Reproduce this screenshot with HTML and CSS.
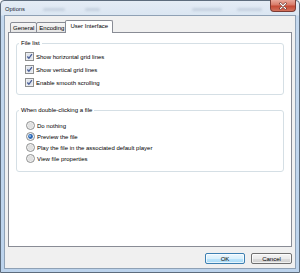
FILE: index.html
```html
<!DOCTYPE html>
<html lang="en">
<head>
  <meta charset="UTF-8">
  <title>Options</title>
  <link rel="stylesheet" href="styles.css">
</head>
<body>
  <div class="window">
    <!-- Title bar -->
    <div class="titlebar">
      <span class="title">Options</span>
      <span class="glass g1"></span>
      <span class="glass g2"></span>
      <span class="glass g3"></span>
      <span class="glass g4"></span>
      <div class="close">
        <svg viewBox="0 0 10 8" width="10" height="8">
          <path d="M2.5 1.5 L7.5 6.5 M7.5 1.5 L2.5 6.5" stroke="#5a2a24" stroke-width="2.4" stroke-linecap="round"/>
          <path d="M2.5 1.5 L7.5 6.5 M7.5 1.5 L2.5 6.5" stroke="#fff" stroke-width="1.2" stroke-linecap="round"/>
        </svg>
      </div>
    </div>

    <div class="client">
      <div class="tabs">
        <div class="tab">General</div>
        <div class="tab">Encoding</div>
        <div class="tab selected">User Interface</div>
      </div>

      <div class="panel">
        <fieldset class="group">
          <legend>File list</legend>
          <div class="rows checks">
            <label class="row">
              <svg class="box" viewBox="0 0 9 9"><rect x=".5" y=".5" width="8" height="8" fill="#f6f6f6" stroke="#8e8f8f"/><rect x="1.5" y="1.5" width="6" height="6" fill="#dfe4ec"/><path d="M2.3 4.5 L3.9 6.3 L6.9 2.2" stroke="#4a5f97" stroke-width="1.3" fill="none"/></svg>
              Show horizontal grid lines
            </label>
            <label class="row">
              <svg class="box" viewBox="0 0 9 9"><rect x=".5" y=".5" width="8" height="8" fill="#f6f6f6" stroke="#8e8f8f"/><rect x="1.5" y="1.5" width="6" height="6" fill="#dfe4ec"/><path d="M2.3 4.5 L3.9 6.3 L6.9 2.2" stroke="#4a5f97" stroke-width="1.3" fill="none"/></svg>
              Show vertical grid lines
            </label>
            <label class="row">
              <svg class="box" viewBox="0 0 9 9"><rect x=".5" y=".5" width="8" height="8" fill="#f6f6f6" stroke="#8e8f8f"/><rect x="1.5" y="1.5" width="6" height="6" fill="#dfe4ec"/><path d="M2.3 4.5 L3.9 6.3 L6.9 2.2" stroke="#4a5f97" stroke-width="1.3" fill="none"/></svg>
              Enable smooth scrolling
            </label>
          </div>
        </fieldset>

        <fieldset class="group second">
          <legend>When double-clicking a file</legend>
          <div class="rows radios">
            <label class="row">
              <svg class="box" viewBox="0 0 9 9"><circle cx="4.5" cy="4.5" r="4" fill="#f4f4f4" stroke="#8e8f8f"/><circle cx="4.5" cy="4.5" r="2.8" fill="#e1e1e1"/></svg>
              Do nothing
            </label>
            <label class="row">
              <svg class="box" viewBox="0 0 9 9"><circle cx="4.5" cy="4.5" r="4" fill="#f4f4f4" stroke="#8e8f8f"/><circle cx="4.5" cy="4.5" r="2.4" fill="#2d67b4"/><circle cx="4" cy="3.9" r="1" fill="#8fc0ee"/></svg>
              Preview the file
            </label>
            <label class="row">
              <svg class="box" viewBox="0 0 9 9"><circle cx="4.5" cy="4.5" r="4" fill="#f4f4f4" stroke="#8e8f8f"/><circle cx="4.5" cy="4.5" r="2.8" fill="#e1e1e1"/></svg>
              Play the file in the associated default player
            </label>
            <label class="row">
              <svg class="box" viewBox="0 0 9 9"><circle cx="4.5" cy="4.5" r="4" fill="#f4f4f4" stroke="#8e8f8f"/><circle cx="4.5" cy="4.5" r="2.8" fill="#e1e1e1"/></svg>
              View file properties
            </label>
          </div>
        </fieldset>
      </div>

      <div class="buttons">
        <button class="button default">OK</button>
        <button class="button">Cancel</button>
      </div>
    </div>
  </div>
</body>
</html>
```

FILE: styles.css
```css
:root {
  --frame: #c4d8ee;
  --tab-border: #898c95;
  --group-border: #d5dfe5;
  --face: #f0f0f0;
}

body {
  margin: 0;
  font-family: 'Liberation Sans', Arial, sans-serif;
  font-size: 6px;
  color: #000;
  background: #fff;
}

.window {
  width: 300px;
  height: 273px;
  box-sizing: border-box;
  border: 1px solid #5d6c7d;
  border-radius: 4px 4px 0 0;
  padding: 0 3px 3px;
  display: flex;
  flex-direction: column;
  background: linear-gradient(to bottom, #e4ecf5 0px, #dbe6f2 14px, var(--frame) 15px, #bcd3ec 100%);
}

.titlebar {
  height: 14px;
  display: flex;
  align-items: center;
  position: relative;
}

.title {
  font-size: 5.8px;
  color: #1a2430;
  padding-left: 1px;
  margin-top: 1px;
}

.glass {
  position: absolute;
  top: 7px;
  height: 3px;
  border-radius: 2px;
  background: rgba(90, 110, 140, 0.18);
  filter: blur(0.8px);
}

.g1 { left: 39px; width: 22px; }
.g2 { left: 81px; width: 15px; }
.g3 { left: 188px; width: 30px; }
.g4 { left: 233px; width: 25px; }

.close {
  margin-left: auto;
  align-self: flex-start;
  margin-top: -1px;
  width: 26px;
  height: 12px;
  box-sizing: border-box;
  border: 1px solid #7b3b33;
  border-top: none;
  border-radius: 0 0 4px 4px;
  background: linear-gradient(to bottom, #e9a99c 0%, #d97a68 45%, #c44a35 55%, #d4725d 100%);
  display: flex;
  align-items: center;
  justify-content: center;
}

.client {
  flex: 1;
  display: flex;
  flex-direction: column;
  border: 1px solid #8fa1b5;
  background: var(--face);
  padding: 4px 3px 4px;
}

.tabs {
  display: flex;
  align-items: flex-end;
  padding-left: 2px;
  margin-bottom: -1px;
  position: relative;
  z-index: 1;
}

.tab {
  height: 11px;
  box-sizing: border-box;
  padding: 0 2px;
  line-height: 10px;
  border: 1px solid var(--tab-border);
  border-radius: 2px 2px 0 0;
  background: linear-gradient(to bottom, #f6f6f6, #e4e4e4);
  margin-left: -1px;
}

.tab:first-child {
  margin-left: 0;
}

.tab.selected {
  height: 13px;
  padding: 0 4px;
  margin-left: -2px;
  line-height: 11px;
  border-bottom: none;
  background: #fff;
}

.panel {
  flex: 1;
  border: 1px solid var(--tab-border);
  background: #fff;
  display: flex;
  flex-direction: column;
}

.group {
  margin: 6px 7px 0;
  padding: 0 0 5px 2px;
  border: 1px solid var(--group-border);
  border-radius: 3px;
  min-width: 0;
}

.group.second {
  margin-top: 11px;
  padding-bottom: 7px;
}

legend {
  padding: 0 2px;
  line-height: 8px;
}

.rows {
  display: flex;
  flex-direction: column;
  padding-left: 6px;
}

.checks {
  padding-top: 3px;
}

.checks .row {
  height: 13px;
}

.radios {
  padding-top: 6px;
  padding-left: 7px;
}

.radios .row {
  height: 11px;
}

.row {
  display: flex;
  align-items: center;
  gap: 2px;
}

.box {
  width: 9px;
  height: 9px;
  flex: none;
}

.buttons {
  display: flex;
  justify-content: flex-end;
  gap: 6px;
  margin-top: 6px;
}

.button {
  width: 41px;
  height: 11px;
  padding: 0;
  font-family: inherit;
  font-size: 6px;
  color: #000;
  border: 1px solid #707070;
  border-radius: 2px;
  background: linear-gradient(to bottom, #f4f4f4 0%, #ebebeb 50%, #dddddd 50%, #cfcfcf 100%);
  box-shadow: inset 0 0 0 1px rgba(255, 255, 255, 0.7);
}

.button.default {
  width: 40px;
  border-color: #3c7fb1;
  background: linear-gradient(to bottom, #eaf6fd 0%, #d9f0fc 50%, #bee6fd 50%, #a7d9f5 100%);
}
```
